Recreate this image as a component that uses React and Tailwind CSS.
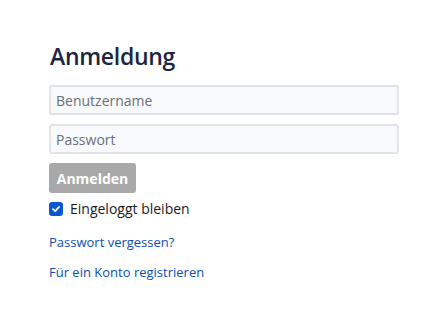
export default function App() {
  return (
    <div className="w-[447px] h-[321px] bg-white" style={{ fontFamily: '"Open Sans", "Noto Sans", sans-serif' }}>
      <div className="pl-[49px] pr-[48px] pt-[40px] flex flex-col">
        <h1 className="text-[23px] leading-[32px] font-semibold text-[#1c2541] ml-[1px] tracking-[-0.3px]">Anmeldung</h1>
        <input
          type="text"
          placeholder="Benutzername"
          className="mt-[13px] h-[30px] w-full rounded-[3px] border-2 border-[#e1e3e8] bg-[#f8f9fb] px-[5px] text-[14px] text-[#333] placeholder:text-[#6b6f78] outline-none"
        />
        <input
          type="password"
          placeholder="Passwort"
          className="mt-[9px] h-[30px] w-full rounded-[3px] border-2 border-[#e1e3e8] bg-[#f8f9fb] px-[5px] text-[14px] text-[#333] placeholder:text-[#6b6f78] outline-none"
        />
        <button className="mt-[9px] h-[30px] w-[87px] rounded-[3px] bg-[#a9a9a9] text-white text-[14px] font-bold">
          Anmelden
        </button>
        <label className="mt-[5px] flex items-center gap-[7px] text-[14px] text-[#1b1b1b]">
          <span className="w-[14px] h-[14px] rounded-[3px] bg-[#0b57d0] flex items-center justify-center">
            <svg width="10" height="10" viewBox="0 0 10 10">
              <path d="M2 5.2 L4.2 7.2 L8 3" stroke="white" strokeWidth="1.8" fill="none" strokeLinecap="round" strokeLinejoin="round" />
            </svg>
          </span>
          Eingeloggt bleiben
        </label>
        <a className="mt-[14px] text-[13px] text-[#0a4fb0]">Passwort vergessen?</a>
        <a className="mt-[10px] text-[13px] text-[#0a4fb0]">Für ein Konto registrieren</a>
      </div>
    </div>
  );
}
